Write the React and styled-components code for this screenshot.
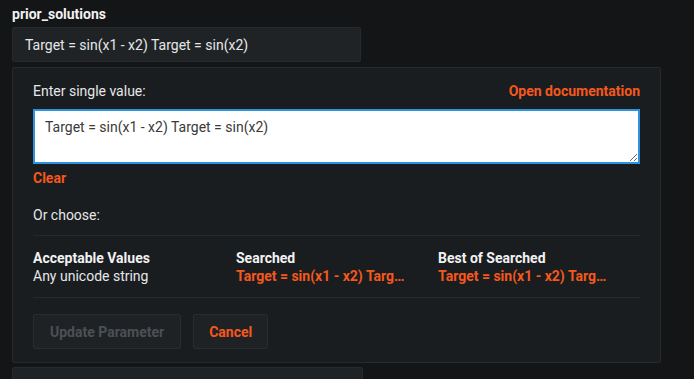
import React, { useEffect, useRef } from 'react';
import styled, { createGlobalStyle } from 'styled-components';

const GlobalStyle = createGlobalStyle`
  html, body {
    margin: 0;
    background: #131517;
    font-family: Roboto, "Liberation Sans", sans-serif;
    color: #e6e7e8;
  }
`;

const ORANGE = '#f5581c';

const Page = styled.div`
  padding: 5px 12px 0;
  height: 379px;
  box-sizing: border-box;
  overflow: hidden;
`;

const Title = styled.div`
  font-size: 14px;
  font-weight: 700;
  line-height: 18px;
  color: #f2f2f2;
  margin-bottom: 4px;
`;

const ValueBox = styled.div`
  width: 349px;
  height: 35px;
  box-sizing: border-box;
  display: flex;
  align-items: center;
  padding: 0 12px;
  background: #202326;
  border: 1px solid #272a2d;
  border-radius: 2px;
  font-size: 14px;
  color: #e6e7e8;
`;

const Panel = styled.div`
  width: 649px;
  height: 296px;
  box-sizing: border-box;
  margin-top: 5px;
  padding: 13px 20px 0;
  background: #1a1d20;
  border: 1px solid #262a2d;
  border-radius: 2px;
  display: flex;
  flex-direction: column;
`;

const HeaderRow = styled.div`
  display: flex;
  justify-content: space-between;
  align-items: center;
  height: 20px;
  font-size: 14px;
`;

const Link = styled.span`
  color: ${ORANGE};
  font-weight: 700;
  font-size: 14px;
  cursor: pointer;
`;

const TextArea = styled.textarea`
  margin-top: 8px;
  width: 607px;
  height: 55px;
  box-sizing: border-box;
  border: 2px solid #2b93e0;
  border-radius: 0;
  background: #fff;
  color: #3a3a3a;
  font-family: Roboto, "Liberation Sans", sans-serif;
  font-size: 14px;
  line-height: 18px;
  padding: 7px 10px;
  outline: none;
  resize: vertical;
  caret-color: #222;
`;

const ClearRow = styled.div`
  margin-top: 4px;
  height: 20px;
  display: flex;
  align-items: center;
`;

const Label = styled.div`
  margin-top: 17px;
  height: 20px;
  display: flex;
  align-items: center;
  font-size: 14px;
`;

const Divider = styled.div`
  height: 1px;
  background: #262a2d;
  margin-top: ${p => p.$top}px;
`;

const Columns = styled.div`
  display: grid;
  grid-template-columns: 203px 202px 1fr;
  padding-top: 13px;
  height: 48px;
`;

const Column = styled.div`
  display: flex;
  flex-direction: column;
  font-size: 14px;
  line-height: 18px;
`;

const ColHead = styled.div`
  font-weight: 700;
  color: #f2f2f2;
`;

const ColValue = styled.div`
  color: ${p => (p.$accent ? ORANGE : '#e6e7e8')};
  font-weight: ${p => (p.$accent ? 700 : 400)};
  white-space: nowrap;
`;

const Buttons = styled.div`
  display: flex;
  gap: 12px;
  margin-top: 16px;
`;

const Button = styled.button`
  height: 35px;
  padding: 0 ${p => (p.$wide ? 16 : 15)}px;
  background: #1f2225;
  border: 1px solid #2a2d30;
  border-radius: 2px;
  font-family: Roboto, "Liberation Sans", sans-serif;
  font-size: 14px;
  font-weight: 700;
  color: ${p => (p.disabled ? '#4c5054' : ORANGE)};
  cursor: ${p => (p.disabled ? 'default' : 'pointer')};
`;

const NextBox = styled.div`
  margin-top: 4px;
  width: 349px;
  height: 20px;
  background: #202326;
  border: 1px solid #272a2d;
  border-radius: 2px;
`;

const value = 'Target = sin(x1 - x2) Target = sin(x2)';
const shortValue = 'Target = sin(x1 - x2) Targ…';

export default function App() {
  const areaRef = useRef(null);

  useEffect(() => {
    const el = areaRef.current;
    if (el) {
      el.focus();
      el.setSelectionRange(0, 0);
    }
  }, []);

  return (
    <Page>
      <GlobalStyle />
      <Title>prior_solutions</Title>
      <ValueBox>{value}</ValueBox>
      <Panel>
        <HeaderRow>
          <span>Enter single value:</span>
          <Link>Open documentation</Link>
        </HeaderRow>
        <TextArea ref={areaRef} defaultValue={value} />
        <ClearRow>
          <Link>Clear</Link>
        </ClearRow>
        <Label>Or choose:</Label>
        <Divider $top={10} />
        <Columns>
          <Column>
            <ColHead>Acceptable Values</ColHead>
            <ColValue>Any unicode string</ColValue>
          </Column>
          <Column>
            <ColHead>Searched</ColHead>
            <ColValue $accent>{shortValue}</ColValue>
          </Column>
          <Column>
            <ColHead>Best of Searched</ColHead>
            <ColValue $accent>{shortValue}</ColValue>
          </Column>
        </Columns>
        <Divider $top={0} />
        <Buttons>
          <Button disabled $wide>Update Parameter</Button>
          <Button>Cancel</Button>
        </Buttons>
      </Panel>
      <NextBox />
    </Page>
  );
}
